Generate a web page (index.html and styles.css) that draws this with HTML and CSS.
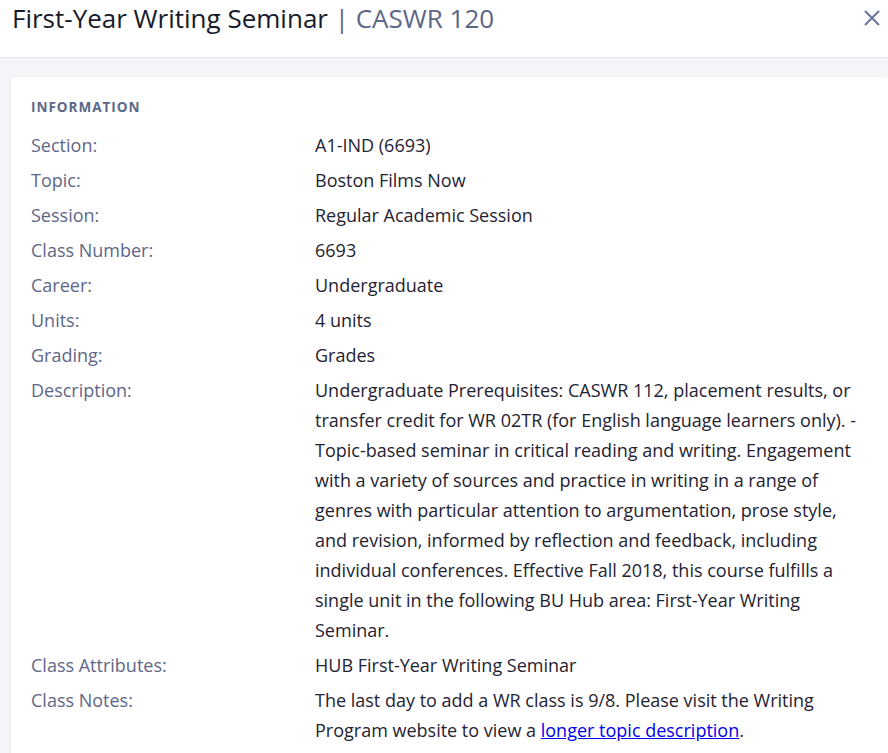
FILE: index.html
```html
<!DOCTYPE html>
<html>
<head>
<meta charset="utf-8">
<link rel="stylesheet" href="styles.css">
</head>
<body>
<header class="header">
  <h1 class="title">First-Year Writing Seminar <span class="code">| CASWR 120</span></h1>
  <button class="close" aria-label="Close">
    <svg width="16" height="16" viewBox="0 0 16 16"><path d="M1 1 L15 15 M15 1 L1 15" stroke="#6b7499" stroke-width="2" fill="none"/></svg>
  </button>
</header>
<main class="content">
  <section class="card">
    <h2 class="card-title">INFORMATION</h2>
    <dl class="info">
      <dt>Section:</dt><dd>A1-IND (6693)</dd>
      <dt>Topic:</dt><dd>Boston Films Now</dd>
      <dt>Session:</dt><dd>Regular Academic Session</dd>
      <dt>Class Number:</dt><dd>6693</dd>
      <dt>Career:</dt><dd>Undergraduate</dd>
      <dt>Units:</dt><dd>4 units</dd>
      <dt>Grading:</dt><dd>Grades</dd>
      <dt>Description:</dt><dd>Undergraduate Prerequisites: CASWR 112, placement results, or transfer credit for WR 02TR (for English language learners only). - Topic-based seminar in critical reading and writing. Engagement with a variety of sources and practice in writing in a range of genres with particular attention to argumentation, prose style, and revision, informed by reflection and feedback, including individual conferences. Effective Fall 2018, this course fulfills a single unit in the following BU Hub area: First-Year Writing Seminar.</dd>
      <dt>Class Attributes:</dt><dd>HUB First-Year Writing Seminar</dd>
      <dt>Class Notes:</dt><dd>The last day to add a WR class is 9/8. Please visit the Writing Program website to view a <a href="#">longer topic description</a>.</dd>
    </dl>
  </section>
</main>
</body>
</html>
```
FILE: styles.css
```css
html, body {
  margin: 0;
  padding: 0;
}
body {
  font-family: "Open Sans", "Noto Sans", sans-serif;
  background: #f4f5f9;
  color: #1f2333;
}
.header {
  height: 58px;
  background: #fff;
  border-bottom: 1px solid #dfe2ea;
  display: flex;
  align-items: flex-start;
  justify-content: space-between;
  padding: 0 8px 0 12px;
  box-sizing: border-box;
}
.title {
  margin: 0;
  font-size: 26px;
  font-weight: 400;
  color: #161a2b;
  line-height: 36px;
}
.code {
  color: #5d6788;
}
.close {
  border: 0;
  background: none;
  padding: 0;
  margin-top: 10px;
  width: 16px;
  height: 16px;
  cursor: pointer;
}
.content {
  padding: 19px 0 0 11px;
}
.card {
  background: #fff;
  border-radius: 4px 4px 0 0;
  box-shadow: -1px 0 2px rgba(20, 30, 60, 0.06);
  padding: 20px 20px 10px 20px;
  min-height: 660px;
}
.card-title {
  margin: 0 0 13px;
  font-size: 13.5px;
  font-weight: 700;
  letter-spacing: 1px;
  color: #5d6788;
  line-height: 20px;
}
.info {
  display: grid;
  grid-template-columns: 284px 1fr;
  row-gap: 5px;
  margin: 0;
  font-size: 18px;
  line-height: 30px;
}
.info dt {
  color: #5d6788;
}
.info dd {
  margin: 0;
  color: #1f2333;
}
.info a {
  color: #0000ee;
}
```
